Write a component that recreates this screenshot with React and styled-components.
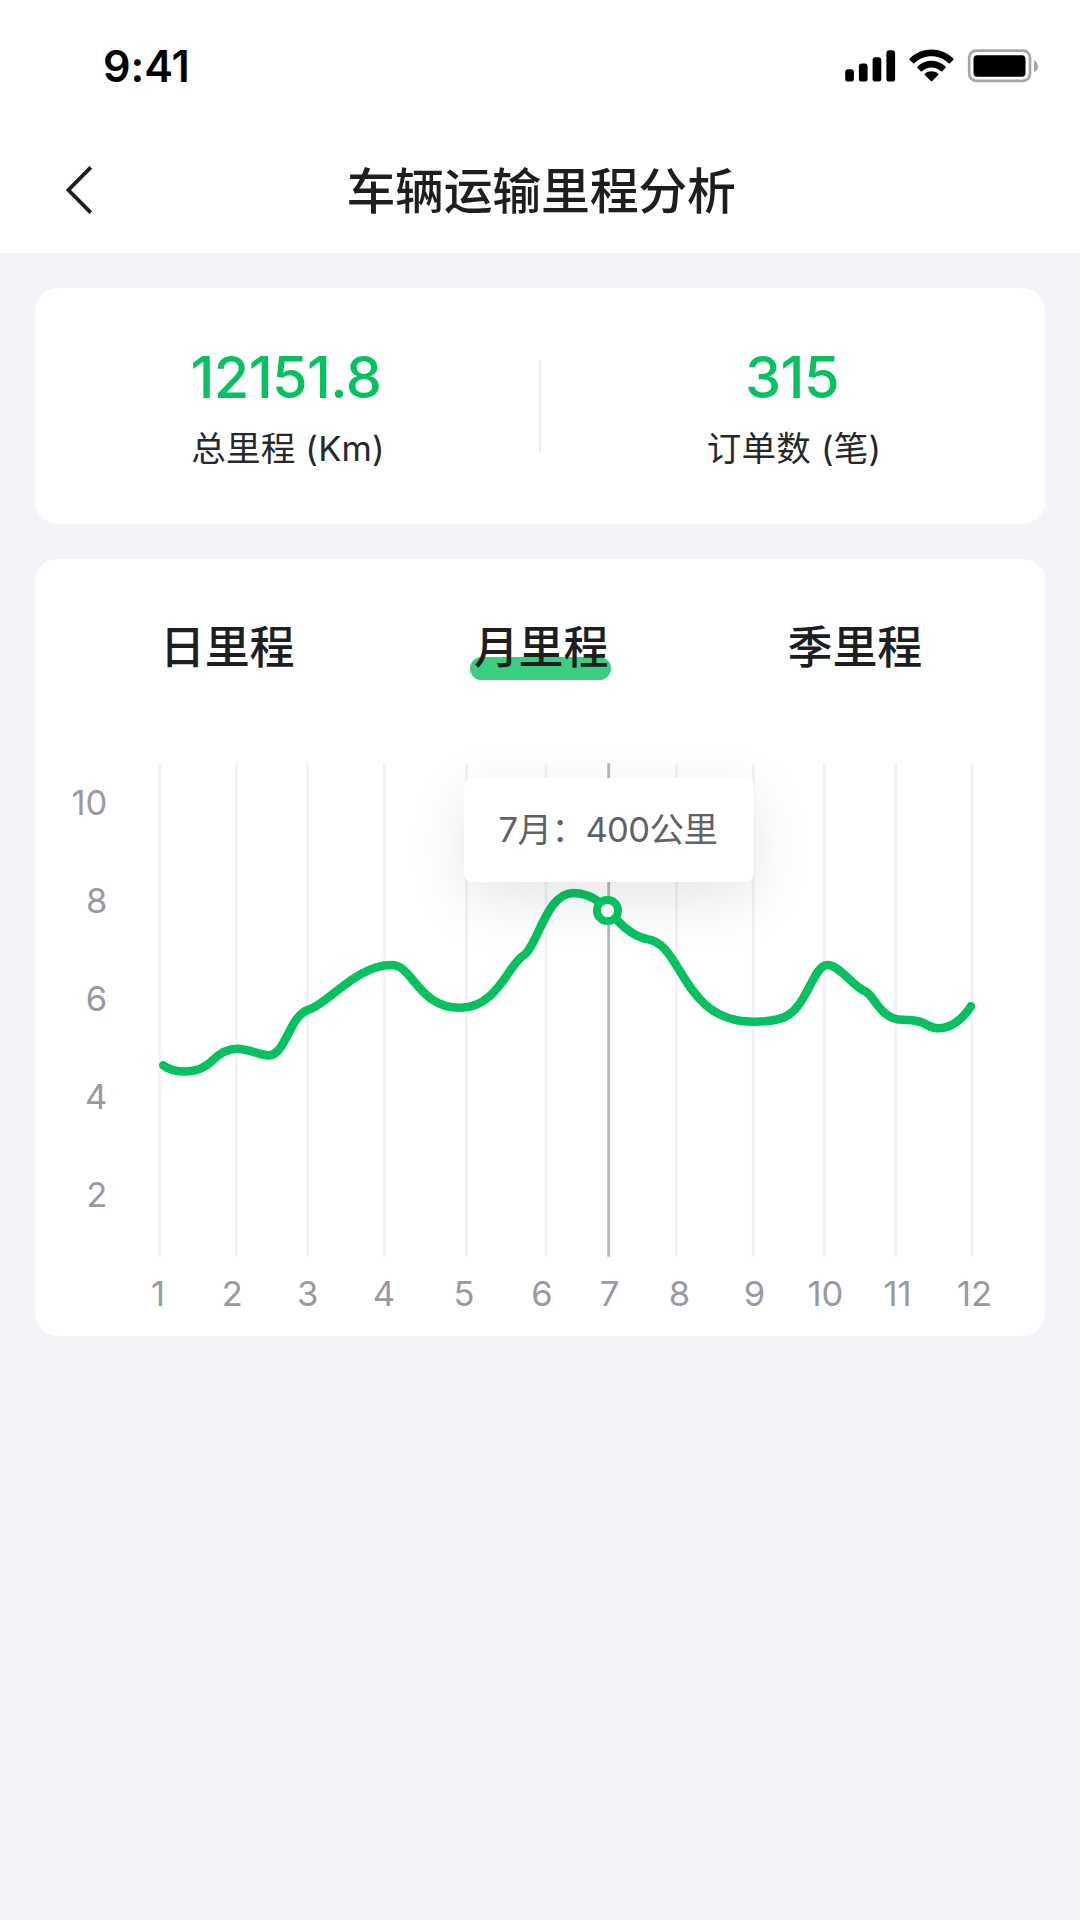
import React, { useState } from 'react';
import styled, { createGlobalStyle } from 'styled-components';

const months = [
  { label: '1', line: 159.8, text: 158 },
  { label: '2', line: 236.5, text: 232.3 },
  { label: '3', line: 307.5, text: 307.7 },
  { label: '4', line: 384.3, text: 384 },
  { label: '5', line: 466.5, text: 464 },
  { label: '6', line: 546, text: 542 },
  { label: '7', line: 608.7, text: 609.5 },
  { label: '8', line: 676.6, text: 679.5 },
  { label: '9', line: 753.3, text: 754.5 },
  { label: '10', line: 824.4, text: 825.5 },
  { label: '11', line: 895.6, text: 897.5 },
  { label: '12', line: 972, text: 974.5 },
];

const levels = [
  { label: '10', y: 815 },
  { label: '8', y: 913 },
  { label: '6', y: 1011 },
  { label: '4', y: 1109 },
  { label: '2', y: 1207 },
];

const tabs = ['日里程', '月里程', '季里程'];

const curve = `M163.3 1065.3
  C168 1069 176 1071.5 185.7 1071.5
  C196 1071.5 206 1067 213 1060
  C220 1053 228 1048.7 237.3 1048.7
  C249 1048.7 260 1055.4 268.7 1055.4
  C286 1055.4 289 1015 309.3 1009.3
  C328 1004 356 965 391.7 965
  C413 965 418 1007.7 460 1007.7
  C497 1007.7 508 965 523.3 955.7
  C538 946 546 893 573.3 893
  C586 893 594 897.5 602 904
  C612 912 624 934 646.7 939
  C683 943 681 1021.7 753.3 1021.7
  C763 1021.7 773 1020.5 779 1019
  C807 1013 812 965 827.3 965
  C840 965 852 986 865.5 991.5
  C875 996 880 1019.7 903 1019.7
  C928 1019.7 926 1028.3 938.3 1028.3
  C951 1028.3 961 1021 971 1006.3`;

const App = () => {
  const [active, setActive] = useState('月里程');

  return (
    <Page>
      <GlobalStyle />
      <Header>
        <StatusBar>
          <Time>9:41</Time>
          <StatusIcons />
        </StatusBar>
        <NavBar>
          <BackButton aria-label="back">
            <svg width="30" height="52" viewBox="0 0 30 52">
              <path
                d="M25.8 3.3 L3.4 26 L25.8 48.7"
                fill="none"
                stroke="#1c1e1f"
                strokeWidth="3.8"
              />
            </svg>
          </BackButton>
          <Title>车辆运输里程分析</Title>
          <NavSide />
        </NavBar>
      </Header>

      <Content>
        <Summary>
          <Stat>
            <StatValue>12151.8</StatValue>
            <StatLabel>总里程 (Km)</StatLabel>
          </Stat>
          <Divider />
          <Stat>
            <StatValue>315</StatValue>
            <StatLabel>订单数 (笔)</StatLabel>
          </Stat>
        </Summary>

        <ChartCard>
          <Tabs>
            {tabs.map(tab => (
              <Tab
                key={tab}
                $active={tab === active}
                onClick={() => setActive(tab)}
              >
                {tab}
              </Tab>
            ))}
          </Tabs>
          <Chart />
        </ChartCard>
      </Content>
    </Page>
  );
};

const StatusIcons = () => (
  <svg width="196" height="36" viewBox="844 48 196 36">
    <rect x="845.2" y="69.3" width="8.7" height="12.3" rx="2.9" />
    <rect x="858.9" y="63.6" width="8.7" height="18" rx="2.9" />
    <rect x="872.6" y="57.3" width="8.7" height="24.3" rx="2.9" />
    <rect x="886.4" y="50.3" width="8.7" height="31.3" rx="2.9" />
    <g transform="translate(909.5 49.6) scale(2.88 2.95)">
      <path d="M7.637 2.277c2.216 0 4.347.852 5.953 2.379.12.118.314.116.433-.004l1.156-1.166a.32.32 0 0 0-.003-.456c-4.215-4.04-10.865-4.04-15.08 0a.32.32 0 0 0-.003.456l1.156 1.166c.12.12.313.122.434.004 1.606-1.527 3.738-2.379 5.954-2.379z" />
      <path d="M7.637 6.073c1.217 0 2.391.453 3.294 1.27.122.116.314.113.433-.006l1.154-1.167a.325.325 0 0 0-.004-.459c-2.748-2.556-7.004-2.556-9.752 0a.325.325 0 0 0-.005.459l1.155 1.167c.119.119.311.122.433.006.902-.817 2.075-1.27 3.292-1.27z" />
      <path d="M9.95 8.627a.31.31 0 0 0-.01-.45c-1.33-1.098-3.278-1.098-4.608 0a.31.31 0 0 0-.009.45l2.098 2.016a.33.33 0 0 0 .461 0z" />
    </g>
    <rect
      x="969.2"
      y="50.6"
      width="60.8"
      height="30.2"
      rx="7"
      fill="none"
      stroke="#a6a6a6"
      strokeWidth="2.7"
    />
    <rect x="973.5" y="55.3" width="52" height="21.4" rx="3.8" />
    <path d="M1034 60.4 C1039.3 62.7 1039.3 69.9 1034 72.2 Z" fill="#a6a6a6" />
  </svg>
);

const Chart = () => (
  <ChartBox>
    <ChartSvg viewBox="35 750 1010 586">
      {months.map(({ label, line }) => (
        <GridLine
          key={label}
          x1={line}
          x2={line}
          y1="763.2"
          y2="1256.8"
          $current={label === '7'}
        />
      ))}
      <path
        d={curve}
        fill="none"
        stroke="#07c160"
        strokeWidth="8.6"
        strokeLinecap="round"
      />
      {levels.map(({ label, y }) => (
        <AxisText key={label} x="107.3" y={y} textAnchor="end">
          {label}
        </AxisText>
      ))}
      {months.map(({ label, text }) => (
        <AxisText key={label} x={text} y="1305.6" textAnchor="middle">
          {label}
        </AxisText>
      ))}
    </ChartSvg>
    <Tooltip>7月：400公里</Tooltip>
    <Marker />
  </ChartBox>
);

const GlobalStyle = createGlobalStyle`
  * {
    box-sizing: border-box;
  }
  body {
    margin: 0;
    background: #f2f4f8;
    font-family: Inter, 'Noto Sans CJK SC', sans-serif;
  }
  button {
    padding: 0;
    border: none;
    background: none;
    font-family: inherit;
    cursor: pointer;
  }
  svg {
    display: block;
  }
`;

const Page = styled.div`
  width: 1080px;
  min-height: 1920px;
  background: #f2f4f8;
  color: #1c1e1f;
`;

const Header = styled.header`
  height: 253.4px;
  background: #fff;
`;

const StatusBar = styled.div`
  display: flex;
  align-items: center;
  justify-content: space-between;
  height: 132px;
  padding: 0 40px 0 103px;
`;

const Time = styled.span`
  color: #000;
  font-size: 43.2px;
  font-weight: 600;
  letter-spacing: -0.1px;
`;

const NavBar = styled.div`
  display: flex;
  align-items: center;
  height: 116px;
  padding: 0 63px 0 65px;
`;

const BackButton = styled.button`
  width: 60px;
`;

const NavSide = styled.div`
  width: 60px;
`;

const Title = styled.h1`
  flex: 1;
  margin: 0;
  padding-top: 4px;
  text-align: center;
  font-size: 48.96px;
  font-weight: 500;
  line-height: 70px;
  letter-spacing: -0.3px;
`;

const Content = styled.main`
  display: flex;
  flex-direction: column;
  gap: 34.6px;
  padding: 34.6px 35px;
`;

const Card = styled.section`
  border-radius: 23px;
  background: #fff;
`;

const Summary = styled(Card)`
  display: flex;
  height: 236.2px;
  padding-top: 56px;
`;

const Stat = styled.div`
  flex: 1;
  text-align: center;
`;

const StatValue = styled.div`
  padding-right: 2px;
  color: #07c160;
  font-size: 57.6px;
  font-weight: 500;
  line-height: 66px;
  letter-spacing: -0.6px;
`;

const StatLabel = styled.div`
  margin-top: 14px;
  padding-left: 2px;
  color: #262829;
  font-size: 34.56px;
  line-height: 50px;
  letter-spacing: 0.2px;
`;

const Divider = styled.div`
  width: 2px;
  height: 92px;
  margin-top: 16px;
  background: #ebeef2;
`;

const ChartCard = styled(Card)`
  height: 777.6px;
`;

const Tabs = styled.div`
  display: flex;
  justify-content: space-between;
  height: 191.3px;
  padding: 52px 120px 0 121px;
`;

const Tab = styled.button`
  position: relative;
  z-index: 0;
  height: 73px;
  padding: 0 3px 0 4px;
  color: #1c1e1f;
  font-size: 45px;
  font-weight: 500;
  line-height: 73px;
  letter-spacing: -0.2px;

  &::after {
    content: '';
    display: ${({ $active }) => ($active ? 'block' : 'none')};
    position: absolute;
    z-index: -1;
    left: 0;
    right: 0;
    bottom: 4px;
    height: 23px;
    border-radius: 12px;
    background: #3bce80;
  }
`;

const ChartBox = styled.div`
  position: relative;
  height: 586px;
`;

const ChartSvg = styled.svg`
  width: 1010px;
  height: 586px;
`;

const GridLine = styled.line`
  stroke: ${({ $current }) => ($current ? '#b8bac2' : '#f1f1f6')};
  stroke-width: 2.9px;
`;

const AxisText = styled.text`
  fill: #9998a3;
  font-size: 34.56px;
`;

const Tooltip = styled.div`
  position: absolute;
  top: 28px;
  left: 429px;
  width: 290px;
  height: 103.5px;
  padding-right: 2px;
  border-radius: 8.6px;
  background: #fff;
  box-shadow: 0 17px 58px rgba(0, 0, 0, 0.1);
  color: #606266;
  font-size: 34.56px;
  line-height: 103px;
  letter-spacing: -0.6px;
  text-align: center;
  white-space: nowrap;
`;

const Marker = styled.div`
  position: absolute;
  top: 146px;
  left: 558.4px;
  width: 28.6px;
  height: 28.6px;
  border: 8.6px solid #07c160;
  border-radius: 50%;
  background: #fff;
`;

export default App;
